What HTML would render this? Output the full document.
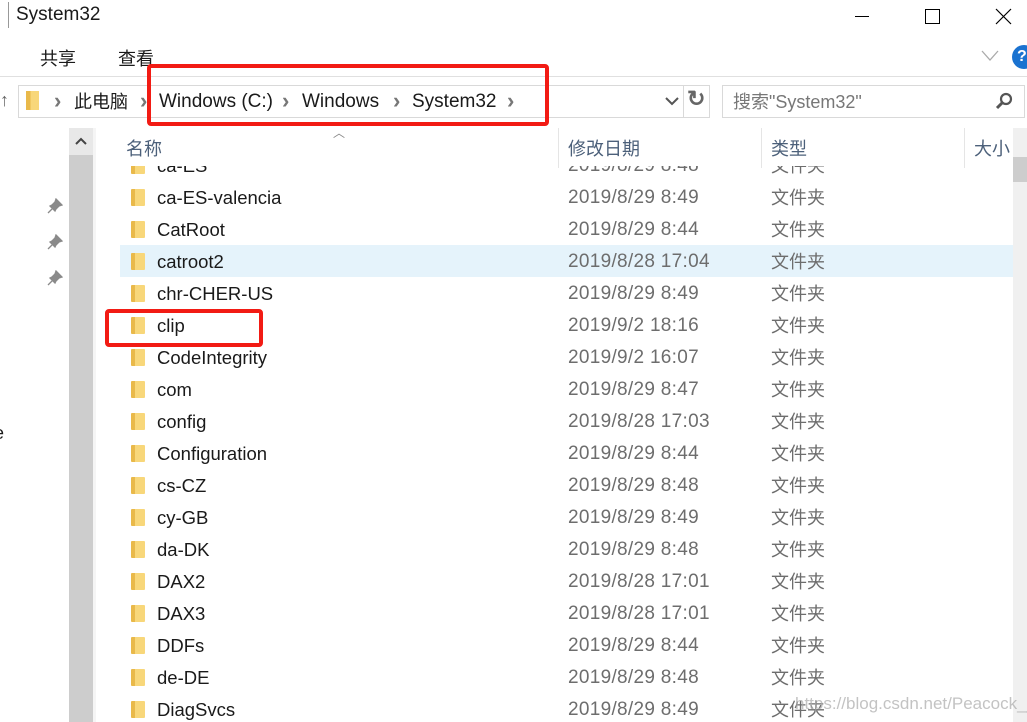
<!DOCTYPE html>
<html><head><meta charset="utf-8"><style>
*{margin:0;padding:0;box-sizing:border-box}
body{width:1027px;height:722px;overflow:hidden;background:#fff;position:relative;font-family:"Liberation Sans","Noto Sans CJK SC",sans-serif;color:#1a1a1a}
.a{position:absolute;white-space:nowrap}
.row{position:absolute;left:120px;width:893px;height:32px;font-size:18px;line-height:24px}
.row .ic{position:absolute;left:11px;top:8px;width:14px;height:17px;background:linear-gradient(90deg,#e9b94a 0 30%,#f8d77a 30%);border-radius:1px}
.row .n{position:absolute;left:37px;top:5px;font-size:18.5px}
.row .d{position:absolute;left:448px;top:5px;color:#6d6d6d;font-size:19px;letter-spacing:0.3px}
.row .t{position:absolute;left:651px;top:5px;color:#6d6d6d}
.ch{position:absolute;font-size:22px;color:#777;font-weight:bold;line-height:24px}
</style></head><body>
<div class="a" style="left:8px;top:2px;width:1px;height:26px;background:#999"></div>
<div class="a" style="left:16px;top:4px;font-size:19px">System32</div>
<div class="a" style="left:855px;top:16px;width:14px;height:1px;background:#000"></div>
<div class="a" style="left:925px;top:9px;width:15px;height:15px;border:1px solid #000"></div>
<svg class="a" style="left:995px;top:8px" width="17" height="17"><path d="M1 1L16 16M16 1L1 16" stroke="#000" stroke-width="1.2"/></svg>
<div class="a" style="left:40px;top:45px;font-size:18px">共享</div>
<div class="a" style="left:118px;top:45px;font-size:18px">查看</div>
<svg class="a" style="left:981px;top:50px" width="18" height="12"><path d="M1 1L9 10L17 1" stroke="#aaa" fill="none" stroke-width="1.3"/></svg>
<div class="a" style="left:1012px;top:45px;width:24px;height:24px;border-radius:12px;background:#1a72d0;color:#fff;font-size:16px;font-weight:bold;padding-left:5px;line-height:24px">?</div>
<div class="a" style="left:0;top:76px;width:1027px;height:1px;background:#e0e0e0"></div>
<div class="a" style="left:0;top:90px;font-size:18px;color:#666">↑</div>
<div class="a" style="left:18px;top:85px;width:692px;height:33px;border:1px solid #d9d9d9"></div>
<div class="a" style="left:683px;top:86px;width:1px;height:31px;background:#d9d9d9"></div>
<div class="a" style="left:26px;top:91px;width:13px;height:19px;background:linear-gradient(90deg,#e9b94a 0 35%,#f8d77a 35%)"></div>
<div class="ch" style="left:54px;top:89px">›</div>
<div class="a" style="left:74px;top:90px;font-size:18px;line-height:24px">此电脑</div>
<div class="ch" style="left:140px;top:89px">›</div>
<div class="a" style="left:159px;top:90px;font-size:19px;line-height:24px">Windows (C:)</div>
<div class="ch" style="left:282px;top:89px">›</div>
<div class="a" style="left:302px;top:90px;font-size:19px;line-height:24px">Windows</div>
<div class="ch" style="left:393px;top:89px">›</div>
<div class="a" style="left:412px;top:90px;font-size:19px;line-height:24px">System32</div>
<div class="ch" style="left:507px;top:89px">›</div>
<svg class="a" style="left:665px;top:97px" width="14" height="9"><path d="M1 1L7 7L13 1" stroke="#555" fill="none" stroke-width="2"/></svg>
<div class="a" style="left:687px;top:86px;font-size:22px;color:#666;font-weight:bold">↻</div>
<div class="a" style="left:722px;top:85px;width:303px;height:33px;border:1px solid #d9d9d9"></div>
<div class="a" style="left:733px;top:90px;font-size:18px;color:#777;line-height:24px">搜索"System32"</div>
<svg class="a" style="left:995px;top:92px" width="18" height="18"><circle cx="11" cy="7" r="5" stroke="#555" stroke-width="2.2" fill="none"/><path d="M7.5 10.5L2 16" stroke="#555" stroke-width="3"/></svg>
<div class="a" style="left:147px;top:64px;width:402px;height:62px;border:4px solid #f21b14;border-radius:4px"></div>
<div class="a" style="left:69px;top:128px;width:24px;height:27px;background:#e8e8e8"></div>
<svg class="a" style="left:75px;top:137px" width="12" height="8"><path d="M1 7L6 2L11 7" stroke="#444" fill="none" stroke-width="2"/></svg>
<div class="a" style="left:69px;top:155px;width:24px;height:567px;background:#cdcdcd"></div>
<div class="a" style="left:93px;top:128px;width:3px;height:594px;background:#f5f5f5"></div>
<svg class="a" style="left:47px;top:198px" width="16" height="16"><path d="M9 1L15 7L12 8L9 11L8 13L3 8L5 7L8 4Z M5 11L1 15" fill="#8a8a8a" stroke="#8a8a8a" stroke-width="1.3"/></svg>
<svg class="a" style="left:47px;top:234px" width="16" height="16"><path d="M9 1L15 7L12 8L9 11L8 13L3 8L5 7L8 4Z M5 11L1 15" fill="#8a8a8a" stroke="#8a8a8a" stroke-width="1.3"/></svg>
<svg class="a" style="left:47px;top:270px" width="16" height="16"><path d="M9 1L15 7L12 8L9 11L8 13L3 8L5 7L8 4Z M5 11L1 15" fill="#8a8a8a" stroke="#8a8a8a" stroke-width="1.3"/></svg>
<div class="a" style="left:-6px;top:423px;font-size:18px">e</div>
<div class="a" style="left:333px;top:124px;font-size:12px;color:#888">︿</div>
<div class="a" style="left:126px;top:137px;font-size:18px;color:#4c607a;line-height:24px">名称</div>
<div class="a" style="left:558px;top:128px;width:1px;height:40px;background:#e5e5e5"></div>
<div class="a" style="left:568px;top:137px;font-size:18px;color:#4c607a;line-height:24px">修改日期</div>
<div class="a" style="left:761px;top:128px;width:1px;height:40px;background:#e5e5e5"></div>
<div class="a" style="left:771px;top:137px;font-size:18px;color:#4c607a;line-height:24px">类型</div>
<div class="a" style="left:964px;top:128px;width:1px;height:40px;background:#e5e5e5"></div>
<div class="a" style="left:974px;top:137px;font-size:18px;color:#4c607a;line-height:24px">大小</div>
<div class="a" style="left:1013px;top:128px;width:14px;height:594px;background:#f0f0f0"></div>
<div class="a" style="left:1013px;top:157px;width:14px;height:25px;background:#cdcdcd"></div>
<div style="position:absolute;left:0;top:166px;width:1013px;height:556px;overflow:hidden">
<div style="position:absolute;left:0;top:-166px;width:1013px">
<div class="row" style="top:149px"><div class="ic"></div><div class="n">ca-ES</div><div class="d">2019/8/29 8:48</div><div class="t">文件夹</div></div>
<div class="row" style="top:181px"><div class="ic"></div><div class="n">ca-ES-valencia</div><div class="d">2019/8/29 8:49</div><div class="t">文件夹</div></div>
<div class="row" style="top:213px"><div class="ic"></div><div class="n">CatRoot</div><div class="d">2019/8/29 8:44</div><div class="t">文件夹</div></div>
<div class="row" style="top:245px;background:#e5f3fb"><div class="ic"></div><div class="n">catroot2</div><div class="d">2019/8/28 17:04</div><div class="t">文件夹</div></div>
<div class="row" style="top:277px"><div class="ic"></div><div class="n">chr-CHER-US</div><div class="d">2019/8/29 8:49</div><div class="t">文件夹</div></div>
<div class="row" style="top:309px"><div class="ic"></div><div class="n">clip</div><div class="d">2019/9/2 18:16</div><div class="t">文件夹</div></div>
<div class="row" style="top:341px"><div class="ic"></div><div class="n">CodeIntegrity</div><div class="d">2019/9/2 16:07</div><div class="t">文件夹</div></div>
<div class="row" style="top:373px"><div class="ic"></div><div class="n">com</div><div class="d">2019/8/29 8:47</div><div class="t">文件夹</div></div>
<div class="row" style="top:405px"><div class="ic"></div><div class="n">config</div><div class="d">2019/8/28 17:03</div><div class="t">文件夹</div></div>
<div class="row" style="top:437px"><div class="ic"></div><div class="n">Configuration</div><div class="d">2019/8/29 8:44</div><div class="t">文件夹</div></div>
<div class="row" style="top:469px"><div class="ic"></div><div class="n">cs-CZ</div><div class="d">2019/8/29 8:48</div><div class="t">文件夹</div></div>
<div class="row" style="top:501px"><div class="ic"></div><div class="n">cy-GB</div><div class="d">2019/8/29 8:49</div><div class="t">文件夹</div></div>
<div class="row" style="top:533px"><div class="ic"></div><div class="n">da-DK</div><div class="d">2019/8/29 8:48</div><div class="t">文件夹</div></div>
<div class="row" style="top:565px"><div class="ic"></div><div class="n">DAX2</div><div class="d">2019/8/28 17:01</div><div class="t">文件夹</div></div>
<div class="row" style="top:597px"><div class="ic"></div><div class="n">DAX3</div><div class="d">2019/8/28 17:01</div><div class="t">文件夹</div></div>
<div class="row" style="top:629px"><div class="ic"></div><div class="n">DDFs</div><div class="d">2019/8/29 8:44</div><div class="t">文件夹</div></div>
<div class="row" style="top:661px"><div class="ic"></div><div class="n">de-DE</div><div class="d">2019/8/29 8:48</div><div class="t">文件夹</div></div>
<div class="row" style="top:693px"><div class="ic"></div><div class="n">DiagSvcs</div><div class="d">2019/8/29 8:49</div><div class="t">文件夹</div></div>
</div></div>
<div class="a" style="left:105px;top:309px;width:158px;height:38px;border:4px solid #f21b14;border-radius:4px"></div>
<div class="a" style="left:795px;top:694px;font-size:17px;color:rgba(170,170,170,0.7)">https://blog.csdn.net/Peacock__</div>
</body></html>
